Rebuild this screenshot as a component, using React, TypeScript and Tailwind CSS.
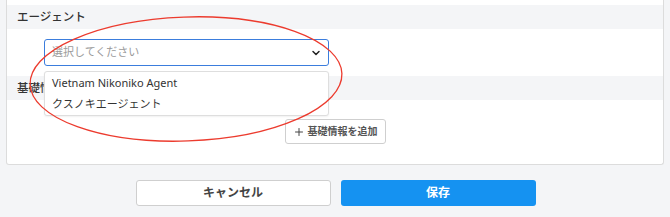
import { ChevronDown, Plus } from "lucide-react";

const font = { fontFamily: '"Noto Sans", "Noto Sans CJK JP", sans-serif' };

function SectionHeader({ label }: { label: string }) {
  return (
    <div className="flex h-[24px] items-center bg-[#f4f5f7] pl-[10px] text-[11.5px] font-medium text-[#333]">
      {label}
    </div>
  );
}

export default function App() {
  return (
    <div className="relative h-[217px] w-[670px] overflow-hidden bg-[#f4f5f7]" style={font}>
      {/* card */}
      <div className="ml-[6px] w-[658px] rounded-b-[3px] border border-t-0 border-[#dcdcdc] bg-white pt-[5px]">
        <SectionHeader label="エージェント" />
        <div className="h-[47px] pl-[37px] pt-[10px]">
          <div className="flex h-[27px] w-[285px] items-center justify-between rounded-[3px] border border-[#3b7ddd] pl-[7px] pr-[6px]">
            <span className="text-[11px] text-[#9a9a9a]">選択してください</span>
            <ChevronDown size={12} strokeWidth={3} className="text-[#222]" />
          </div>
        </div>
        <SectionHeader label="基礎情報" />
        <div className="flex h-[64px] justify-center pt-[19px]">
          <button className="flex h-[25px] items-center gap-[3px] rounded-[3px] border border-[#cfcfcf] bg-white px-[7px] text-[10px] font-semibold text-[#555]">
            <Plus size={12} strokeWidth={2} className="text-[#444]" />
            基礎情報を追加
          </button>
        </div>
      </div>

      {/* footer buttons */}
      <div className="mt-[15px] flex justify-center gap-[10px] pl-[1px]">
        <button className="h-[26px] w-[195px] rounded-[3px] border border-[#cfcfcf] bg-white text-[12px] font-bold text-[#444]">
          キャンセル
        </button>
        <button className="h-[26px] w-[195px] rounded-[3px] bg-[#1592f1] text-[12px] font-bold text-white">
          保存
        </button>
      </div>

      {/* open dropdown menu */}
      <div className="absolute left-[44px] top-[71px] flex h-[45px] w-[285px] flex-col justify-center gap-[5px] rounded-[3px] border border-[#dedede] bg-white pl-[7px] text-[11px] text-[#333] shadow-[0_1px_2px_rgba(0,0,0,0.06)]">
        <div className="leading-[16px]">Vietnam Nikoniko Agent</div>
        <div className="leading-[16px]">クスノキエージェント</div>
      </div>

      {/* red annotation ellipse */}
      <svg className="pointer-events-none absolute left-0 top-0" width="670" height="217">
        <ellipse cx="186" cy="79" rx="156" ry="62" fill="none" stroke="#ec3b2e" strokeWidth="1.3" transform="rotate(-2 186 79)" />
      </svg>
    </div>
  );
}
